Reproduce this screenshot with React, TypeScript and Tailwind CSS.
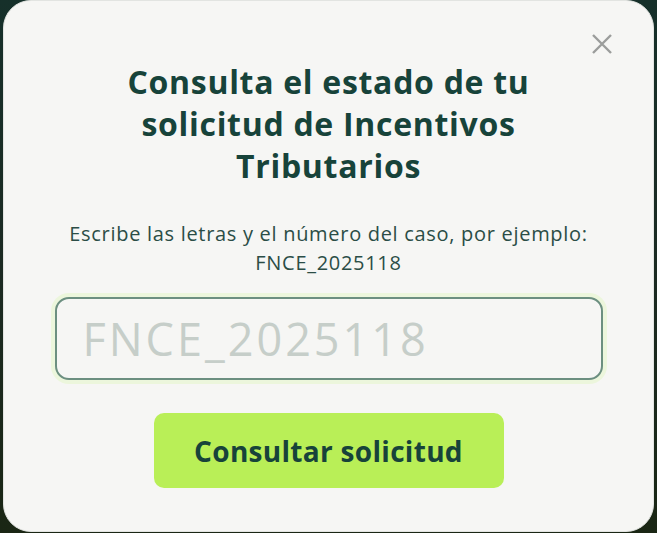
import React from 'react';

export default function App() {
  return (
    <div className="relative h-[533px] w-full overflow-hidden bg-gradient-to-b from-[#16302a] via-[#1b2a22] to-[#1a2614]" style={{ fontFamily: '"Open Sans", "Noto Sans", sans-serif' }}>
      <div className="relative ml-[3px] flex h-[532px] w-[651px] flex-col items-center rounded-[28px] border border-[#e2e4e1] bg-[#f6f6f4]">
        <button className="absolute right-[40px] top-[32px] text-[#9b9d9b]" aria-label="Cerrar">
          <svg width="22" height="22" viewBox="0 0 22 22" fill="none" stroke="currentColor" strokeWidth="2.4">
            <path d="M2 2 L20 20 M20 2 L2 20" />
          </svg>
        </button>

        <h1 className="mt-[60px] w-[480px] text-center text-[32px] font-bold leading-[42px] tracking-[0.7px] text-[#17433a]">
          Consulta el estado de tu solicitud de Incentivos Tributarios
        </h1>

        <p className="mt-[32px] text-center text-[20px] leading-[29px] tracking-[0.7px] text-[#2b4d46]">
          Escribe las letras y el número del caso, por ejemplo:
          <br />
          FNCE_2025118
        </p>

        <div className="mt-[16px] rounded-[18px] bg-[#ecf6dc] p-[4px]">
          <input
            type="text"
            placeholder="FNCE_2025118"
            className="h-[83px] w-[548px] rounded-[14px] border-2 border-[#6c8f80] bg-[#f6f6f4] px-[26px] text-[45px] tracking-[3px] text-[#17433a] outline-none placeholder:text-[#c6cec9]"
          />
        </div>

        <button className="mt-[29px] h-[75px] w-[350px] rounded-[10px] bg-[#b9ef57] text-[28px] font-bold tracking-[0.3px] text-[#17433a]">
          Consultar solicitud
        </button>
      </div>
    </div>
  );
}
